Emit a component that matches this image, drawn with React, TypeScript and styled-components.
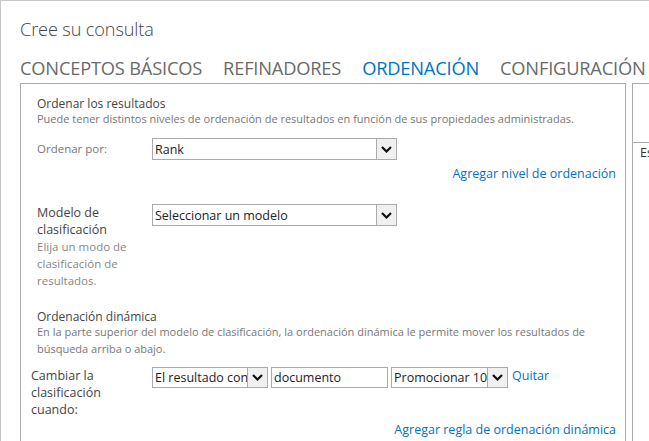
import React from "react";
import styled, { createGlobalStyle } from "styled-components";

const Global = createGlobalStyle`
  html, body { margin: 0; padding: 0; background: #fff; overflow: hidden; }
  body { font-family: "Open Sans", "Liberation Sans", sans-serif; width: 649px; height: 441px; }
`;

const Page = styled.div`
  box-sizing: border-box;
  width: 649px;
  height: 441px;
  border-top: 1px solid #c6c6c6;
  border-left: 1px solid #c6c6c6;
  padding: 17px 0 0 19px;
  overflow: hidden;
`;

const Title = styled.h1`
  margin: 0;
  font-size: 18.1px;
  font-weight: 300;
  color: #444;
  line-height: 22px;
  letter-spacing: -0.1px;
`;

const Tabs = styled.div`
  display: flex;
  gap: 21px;
  margin-top: 16px;
  white-space: nowrap;
`;

const Tab = styled.span<{ $active?: boolean }>`
  font-size: 18.3px;
  font-weight: 400;
  line-height: 24px;
  color: ${(p) => (p.$active ? "#0072c6" : "#6a6a6a")};
  letter-spacing: -0.2px;
`;

const Panels = styled.div`
  display: flex;
  gap: 6px;
  margin-top: 3px;
`;

const MainPanel = styled.div`
  box-sizing: border-box;
  width: 606px;
  height: 400px;
  border: 1px solid #ababab;
  padding: 12px 9px 0 16px;
  flex: none;
`;

const SidePanel = styled.div`
  box-sizing: border-box;
  width: 60px;
  height: 400px;
  border: 1px solid #ababab;
  flex: none;
`;

const SideHead = styled.div`
  height: 58px;
  border-bottom: 1px solid #ababab;
`;

const SideText = styled.div`
  padding: 1px 0 0 7px;
  font-size: 12.5px;
  color: #333;
`;

const SectionTitle = styled.div`
  font-size: 12px;
  color: #444;
  line-height: 15px;
`;

const SectionDesc = styled.div`
  font-size: 11px;
  color: #777;
  line-height: 17px;
  margin-top: -1px;
`;

const FormRow = styled.div<{ $top: number; $indent?: number }>`
  display: grid;
  grid-template-columns: ${(p) => 115 + (p.$indent ?? 0)}px 1fr;
  margin-top: ${(p) => p.$top}px;
  margin-left: ${(p) => -(p.$indent ?? 0)}px;
`;

const Label = styled.div<{ $muted?: boolean; $flush?: boolean }>`
  font-size: ${(p) => (p.$muted ? "11.5px" : "12.5px")};
  color: ${(p) => (p.$muted ? "#777" : "#444")};
  line-height: 17px;
  padding-top: ${(p) => (p.$flush ? 0 : 2)}px;
`;

const LabelHint = styled.div`
  font-size: 11.5px;
  color: #888;
  line-height: 17px;
  width: 100px;
`;

const Controls = styled.div`
  display: flex;
  align-items: flex-start;
  gap: 3px;
`;

const SelectBox = styled.div<{ $w: number; $h?: number }>`
  box-sizing: border-box;
  width: ${(p) => p.$w}px;
  height: ${(p) => p.$h ?? 22}px;
  border: 1px solid #ababab;
  display: flex;
  align-items: center;
  background: #fff;
  flex: none;
`;

const SelectText = styled.span`
  flex: 1;
  padding-left: 2px;
  font-size: 12.5px;
  color: #222;
  overflow: hidden;
  white-space: nowrap;
`;

const DropBtn = styled.span`
  box-sizing: border-box;
  width: 20px;
  height: 100%;
  border-left: 1px solid #ababab;
  background: #f0f0f0;
  display: flex;
  align-items: center;
  justify-content: center;
`;

const TextInput = styled.div<{ $w: number }>`
  box-sizing: border-box;
  width: ${(p) => p.$w}px;
  height: 21px;
  border: 1px solid #ababab;
  padding-left: 2px;
  font-size: 12.5px;
  color: #222;
  line-height: 19px;
  flex: none;
`;

const LinkRow = styled.div<{ $top: number }>`
  display: flex;
  justify-content: flex-end;
  margin-top: ${(p) => p.$top}px;
`;

const Link = styled.a`
  font-size: 12.5px;
  color: #0072c6;
  text-decoration: none;
  line-height: 17px;
  white-space: nowrap;
`;

const InlineLink = styled(Link)`
  margin-left: 1px;
`;

const Section = styled.div<{ $top: number }>`
  margin-top: ${(p) => p.$top}px;
`;

const Chevron = () => (
  <svg width="11" height="7" viewBox="0 0 11 7">
    <path d="M1 1 L5.5 5.5 L10 1" fill="none" stroke="#111" strokeWidth="2.2" />
  </svg>
);

const Select = ({ w, text, h }: { w: number; text: string; h?: number }) => (
  <SelectBox $w={w} $h={h}>
    <SelectText>{text}</SelectText>
    <DropBtn>
      <Chevron />
    </DropBtn>
  </SelectBox>
);

export default function App() {
  return (
    <>
      <Global />
      <Page>
        <Title>Cree su consulta</Title>
        <Tabs>
          <Tab>CONCEPTOS BÁSICOS</Tab>
          <Tab>REFINADORES</Tab>
          <Tab $active>ORDENACIÓN</Tab>
          <Tab>CONFIGURACIÓN</Tab>
        </Tabs>
        <Panels>
          <MainPanel>
            <SectionTitle>Ordenar los resultados</SectionTitle>
            <SectionDesc>
              Puede tener distintos niveles de ordenación de resultados en función de sus propiedades administradas.
            </SectionDesc>
            <FormRow $top={11}>
              <Label $muted>Ordenar por:</Label>
              <Controls>
                <Select w={245} text="Rank" />
              </Controls>
            </FormRow>
            <LinkRow $top={5}>
              <Link>Agregar nivel de ordenación</Link>
            </LinkRow>
            <FormRow $top={22}>
              <div>
                <Label $flush>
                  Modelo de
                  <br />
                  clasificación
                </Label>
                <LabelHint>Elija un modo de clasificación de resultados.</LabelHint>
              </div>
              <Controls>
                <Select w={245} text="Seleccionar un modelo" />
              </Controls>
            </FormRow>
            <Section $top={20}>
              <SectionTitle>Ordenación dinámica</SectionTitle>
              <SectionDesc>
                En la parte superior del modelo de clasificación, la ordenación dinámica le permite mover los resultados de
                búsqueda arriba o abajo.
              </SectionDesc>
            </Section>
            <FormRow $top={10} $indent={6}>
              <Label $flush>
                Cambiar la
                <br />
                clasificación
                <br />
                cuando:
              </Label>
              <Controls>
                <Select w={116} h={21} text="El resultado contiene" />
                <TextInput $w={117}>documento</TextInput>
                <Select w={117} h={21} text="Promocionar 10" />
                <InlineLink>Quitar</InlineLink>
              </Controls>
            </FormRow>
            <LinkRow $top={3}>
              <Link>Agregar regla de ordenación dinámica</Link>
            </LinkRow>
          </MainPanel>
          <SidePanel>
            <SideHead />
            <SideText>Es</SideText>
          </SidePanel>
        </Panels>
      </Page>
    </>
  );
}
